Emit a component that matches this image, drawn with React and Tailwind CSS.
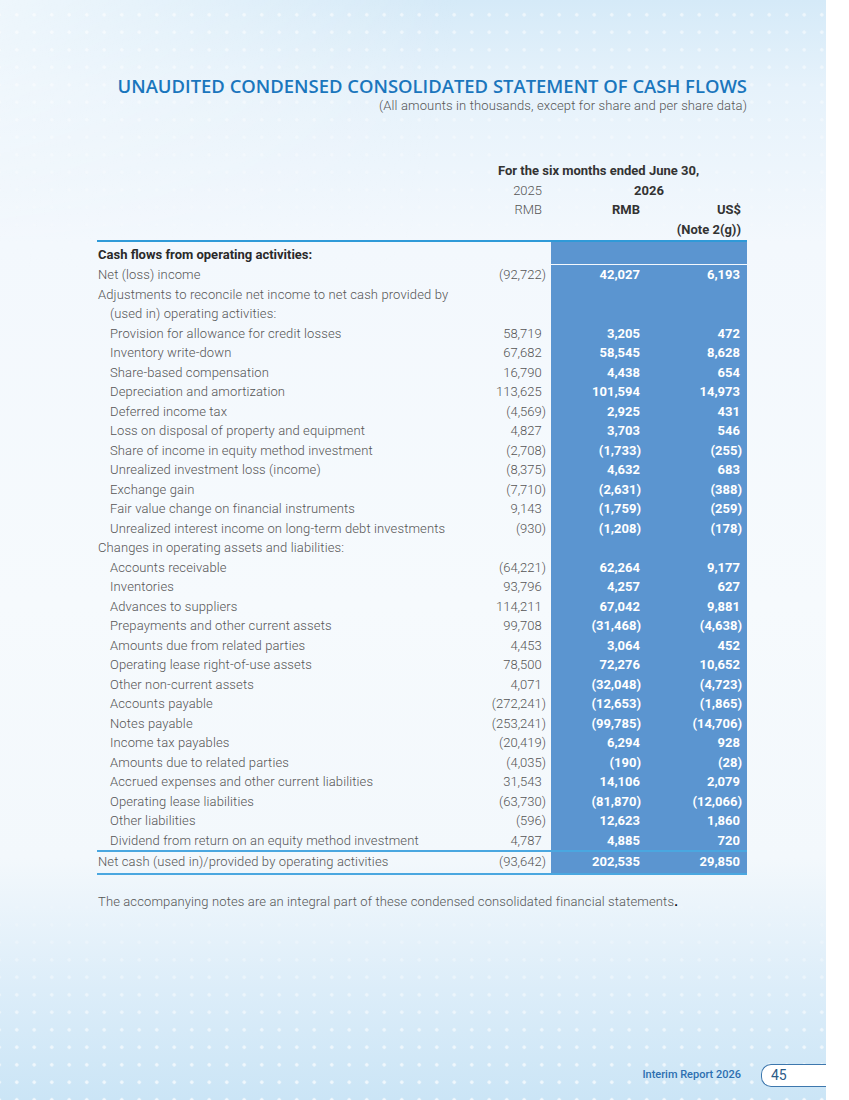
import React from "react";

const rows = [
  { l: "Cash flows from operating activities:", head: true },
  { l: "Net (loss) income", a: "(92,722)", b: "42,027", c: "6,193" },
  { l: "Adjustments to reconcile net income to net cash provided by" },
  { l: "(used in) operating activities:", i: true },
  { l: "Provision for allowance for credit losses", i: true, a: "58,719", b: "3,205", c: "472" },
  { l: "Inventory write-down", i: true, a: "67,682", b: "58,545", c: "8,628" },
  { l: "Share-based compensation", i: true, a: "16,790", b: "4,438", c: "654" },
  { l: "Depreciation and amortization", i: true, a: "113,625", b: "101,594", c: "14,973" },
  { l: "Deferred income tax", i: true, a: "(4,569)", b: "2,925", c: "431" },
  { l: "Loss on disposal of property and equipment", i: true, a: "4,827", b: "3,703", c: "546" },
  { l: "Share of income in equity method investment", i: true, a: "(2,708)", b: "(1,733)", c: "(255)" },
  { l: "Unrealized investment loss (income)", i: true, a: "(8,375)", b: "4,632", c: "683" },
  { l: "Exchange gain", i: true, a: "(7,710)", b: "(2,631)", c: "(388)" },
  { l: "Fair value change on financial instruments", i: true, a: "9,143", b: "(1,759)", c: "(259)" },
  { l: "Unrealized interest income on long-term debt investments", i: true, a: "(930)", b: "(1,208)", c: "(178)" },
  { l: "Changes in operating assets and liabilities:" },
  { l: "Accounts receivable", i: true, a: "(64,221)", b: "62,264", c: "9,177" },
  { l: "Inventories", i: true, a: "93,796", b: "4,257", c: "627" },
  { l: "Advances to suppliers", i: true, a: "114,211", b: "67,042", c: "9,881" },
  { l: "Prepayments and other current assets", i: true, a: "99,708", b: "(31,468)", c: "(4,638)" },
  { l: "Amounts due from related parties", i: true, a: "4,453", b: "3,064", c: "452" },
  { l: "Operating lease right-of-use assets", i: true, a: "78,500", b: "72,276", c: "10,652" },
  { l: "Other non-current assets", i: true, a: "4,071", b: "(32,048)", c: "(4,723)" },
  { l: "Accounts payable", i: true, a: "(272,241)", b: "(12,653)", c: "(1,865)" },
  { l: "Notes payable", i: true, a: "(253,241)", b: "(99,785)", c: "(14,706)" },
  { l: "Income tax payables", i: true, a: "(20,419)", b: "6,294", c: "928" },
  { l: "Amounts due to related parties", i: true, a: "(4,035)", b: "(190)", c: "(28)" },
  { l: "Accrued expenses and other current liabilities", i: true, a: "31,543", b: "14,106", c: "2,079" },
  { l: "Operating lease liabilities", i: true, a: "(63,730)", b: "(81,870)", c: "(12,066)" },
  { l: "Other liabilities", i: true, a: "(596)", b: "12,623", c: "1,860" },
  { l: "Dividend from return on an equity method investment", i: true, a: "4,787", b: "4,885", c: "720" },
];

function Num({ v, mode }) {
  if (!v) return null;
  if (v.endsWith(")")) return <span>{v}</span>;
  if (mode === "paren") {
    return (
      <span>
        {v}
        <span className="invisible">)</span>
      </span>
    );
  }
  return (
    <span>
      {v}
      <span className={mode === "b" ? "inline-block w-[1px]" : "inline-block w-[2px]"} />
    </span>
  );
}

function Row({ r, first }) {
  return (
    <div className={`grid grid-cols-[369px_85px_95px_101px] ${first ? "h-[23px] items-end pb-[1px]" : "h-[19.5px] items-center"}`}>
      <div
        className={`${r.i ? "pl-[13px]" : "pl-[1px]"} ${r.head ? "font-bold text-[#2a2a2a]" : "font-light text-[#555] tracking-[0.12px]"} whitespace-nowrap`}
      >
        {r.l}
      </div>
      <div className="text-right pr-[5px] font-light text-[#555]">
        <Num v={r.a} mode="paren" />
      </div>
      <div className="h-full bg-[#5b95d0] flex items-center justify-end pr-[5px] font-bold text-white">
        <Num v={r.b} mode="b" />
      </div>
      <div className="h-full bg-[#5b95d0] flex items-center justify-end pr-[5px] font-bold text-white">
        <Num v={r.c} mode="c" />
      </div>
    </div>
  );
}

export default function App() {
  return (
    <div className="w-[849px] h-[1100px] bg-white flex">
      <div className="relative w-[826px] h-[1100px] overflow-hidden bg-[linear-gradient(180deg,#d5eaf8_0%,#e6f2fb_8%,#f3f8fd_22%,#f6fafd_55%,#f3f8fc_78%,#dcedf9_90%,#cbe5f6_100%)]">
        <div className="absolute inset-0 bg-[linear-gradient(100deg,rgba(255,255,255,0.6)_0%,rgba(255,255,255,0)_45%)] [mask-image:linear-gradient(180deg,black_0%,transparent_25%)]" />
        <div className="absolute inset-0 bg-[radial-gradient(circle,rgba(255,255,255,0.75)_1.4px,transparent_2.1px)] bg-[size:17.5px_17.5px] bg-[position:8px_6px] [mask-image:linear-gradient(180deg,rgba(0,0,0,0.8)_0%,rgba(0,0,0,0.4)_15%,transparent_26%,transparent_80%,rgba(0,0,0,0.8)_93%,black_100%)]" />
        <div className="relative flex flex-col h-full font-['Roboto',sans-serif] text-[13px]">
          <div className="pt-[75px] w-[747px] text-right">
            <div className="font-['Open_Sans',sans-serif] font-semibold text-[18.45px] leading-[22px] text-[#1a76bd]">
              UNAUDITED CONDENSED CONSOLIDATED STATEMENT OF CASH FLOWS
            </div>
            <div className="leading-[16px] font-light text-[#555] tracking-[0.13px] mt-[1px]">
              (All amounts in thousands, except for share and per share data)
            </div>
          </div>

          <div className="ml-[97px] w-[650px] mt-[47px]">
            <div className="grid grid-cols-[369px_85px_95px_101px] text-[#333]">
              <div className="col-start-2 col-span-3 h-[19.5px] flex items-center pl-[32px] font-bold whitespace-nowrap">
                For the six months ended June 30,
              </div>
              <div className="col-start-2 h-[19.5px] flex items-center justify-end pr-[9px] font-light text-[#555]">2025</div>
              <div className="col-span-2 h-[19.5px] flex items-center justify-center font-bold">2026</div>
              <div className="col-start-2 h-[19.5px] flex items-center justify-end pr-[9px] font-light text-[#555]">RMB</div>
              <div className="h-[19.5px] flex items-center justify-end pr-[6px] font-bold">RMB</div>
              <div className="h-[19.5px] flex items-center justify-end pr-[6px] font-bold">US$</div>
              <div className="col-start-4 h-[19.5px] flex items-center justify-end pr-[6px] font-bold">(Note 2(g))</div>
            </div>
            <div className="h-[2px] bg-[#2f9ad8] mt-[1px]" />
            {rows.map((r, k) => (
              <Row key={k} r={r} first={k === 0} />
            ))}
            <div className="h-[1.5px] bg-[#4aa7e0]" />
            <div className="grid grid-cols-[369px_85px_95px_101px] h-[21px] items-center">
              <div className="pl-[1px] font-light text-[#555] tracking-[0.12px]">Net cash (used in)/provided by operating activities</div>
              <div className="text-right pr-[5px] font-light text-[#555]">(93,642)</div>
              <div className="h-full bg-[#5b95d0] flex items-center justify-end pr-[6px] font-bold text-white">202,535</div>
              <div className="h-full bg-[#5b95d0] flex items-center justify-end pr-[7px] font-bold text-white">29,850</div>
            </div>
            <div className="h-[2px] bg-[#4aa7e0]" />
            <div className="mt-[19px] pl-[1px] font-light text-[#555] tracking-[0.12px] leading-[16px]">
              The accompanying notes are an integral part of these condensed consolidated financial statements<span className="font-bold text-black">.</span>
            </div>
          </div>

          <div className="mt-auto mb-[13px] flex items-center justify-end">
            <span className="text-[11px] font-medium text-[#2d6fb0] mr-[20px]">Interim Report 2026</span>
            <div className="w-[65px] h-[23px] border-[1.5px] border-r-0 border-[#3d77ad] rounded-l-[10px] bg-white flex items-center pl-[9px] text-[14px] text-[#2c5b87]">
              45
            </div>
          </div>
        </div>
      </div>
    </div>
  );
}
